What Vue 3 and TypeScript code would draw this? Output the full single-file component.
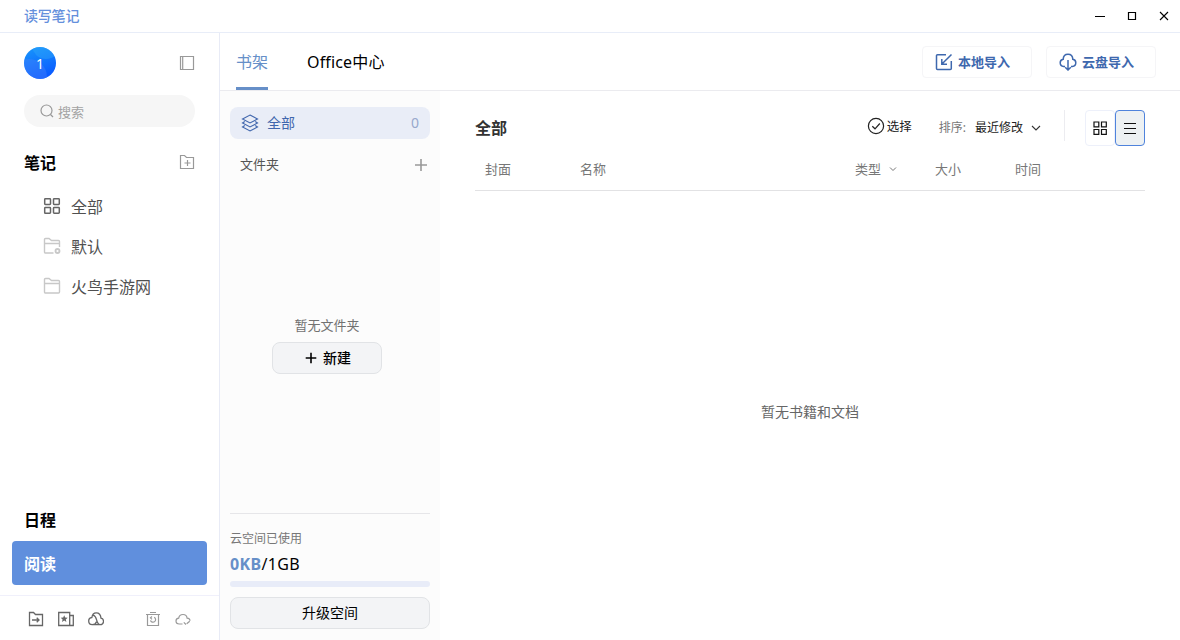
<script setup lang="ts">
import { ref } from 'vue'

interface Folder {
  name: string
  icon: 'grid' | 'default' | 'folder'
}

const folders: Folder[] = [
  { name: '全部', icon: 'grid' },
  { name: '默认', icon: 'default' },
  { name: '火鸟手游网', icon: 'folder' },
]

const tabs: string[] = ['书架', 'Office中心']
const activeTab = ref(0)
const viewMode = ref<'grid' | 'list'>('list')
</script>

<template>
  <div class="window">
    <header class="titlebar">
      <span class="brand">读写笔记</span>
      <div class="controls">
        <svg width="12" height="12" viewBox="0 0 12 12"><path d="M1 6.5h10" /></svg>
        <svg width="12" height="12" viewBox="0 0 12 12"><path d="M2.5 2.5h7v7h-7z" stroke-width="1.2" /></svg>
        <svg width="12" height="12" viewBox="0 0 12 12"><path d="M2 2l8 8M10 2l-8 8" stroke-width="1.1" /></svg>
      </div>
    </header>

    <div class="body">
      <aside class="sidebar">
        <div class="profile">
          <div class="avatar">
            <svg width="32" height="32" viewBox="0 0 32 32">
              <defs>
                <linearGradient id="avatarFill" x1="0" y1="0" x2="0.35" y2="1">
                  <stop offset="0" stop-color="#1898fb" />
                  <stop offset="1" stop-color="#0a5cff" />
                </linearGradient>
                <clipPath id="avatarClip"><circle cx="16" cy="16" r="16" /></clipPath>
              </defs>
              <g clip-path="url(#avatarClip)">
                <path d="M0 0h32v32H0z" fill="url(#avatarFill)" />
                <circle cx="22" cy="-2" r="14" fill="#32a9fb" opacity=".4" />
                <circle cx="5" cy="30" r="18" fill="#4a83fa" opacity=".4" />
              </g>
            </svg>
            <span>1</span>
          </div>
          <svg class="ic panel" width="16" height="16" viewBox="0 0 16 16"><path d="M1.5 1.5h13v13h-13zM3.7 2v12" /></svg>
        </div>

        <div class="search">
          <svg class="ic" width="14" height="14" viewBox="0 0 14 14"><circle cx="6.5" cy="6.5" r="5.5" /><path d="M10.5 10.5l2.5 2.5" /></svg>
          <span>搜索</span>
        </div>

        <div class="notes-head">
          <h2>笔记</h2>
          <svg class="ic" width="16" height="16" viewBox="0 0 16 16"><path d="M1.5 14.5v-13h4l2 2h7v11zM8.5 6v6M5.5 9h6" /></svg>
        </div>

        <ul class="folders">
          <li v-for="f in folders" :key="f.name">
            <svg v-if="f.icon === 'grid'" class="ic grid" width="18" height="18" viewBox="0 0 18 18">
              <rect x="1.7" y="1.7" width="5.8" height="5.8" rx=".7" /><rect x="10.5" y="1.7" width="5.8" height="5.8" rx=".7" />
              <rect x="1.7" y="10.5" width="5.8" height="5.8" rx=".7" /><rect x="10.5" y="10.5" width="5.8" height="5.8" rx=".7" />
            </svg>
            <svg v-else-if="f.icon === 'default'" class="ic pale" width="18" height="18" viewBox="0 0 18 18">
              <path d="M10.5 16h-8a1 1 0 0 1-1-1V2.5a1 1 0 0 1 1-1H6l2.500 2h7a1 1 0 0 1 1 1v5.500M1.500 6.500h15" /><circle cx="14.5" cy="14" r="2" stroke-width="1.8" />
            </svg>
            <svg v-else class="ic pale" width="18" height="18" viewBox="0 0 18 18"><path d="M2.5 16a1 1 0 0 1-1-1V2.500a1 1 0 0 1 1-1H6l2.500 2h7a1 1 0 0 1 1 1V15a1 1 0 0 1-1 1zM1.500 6.500h15" /></svg>
            <span>{{ f.name }}</span>
          </li>
        </ul>

        <div class="schedule">日程</div>
        <div class="reading">阅读</div>

        <footer class="tools">
          <svg class="ic dark" width="16" height="16" viewBox="0 0 16 16"><path d="M1.5 14.5v-13h4l2 2h7v11zM4 9h7M8.700 6.800L11 9l-2.300 2.200" /></svg>
          <svg class="ic dark" width="16" height="16" viewBox="0 0 16 16">
            <path d="M.7 1.5h11v13H.7zM11.7 4.500h3.600v10h-3.600" />
            <path class="solid" d="M6.2 4.2l1 2.300 2.500.2-1.900 1.700.6 2.500-2.200-1.300L4 10.900l.6-2.500-1.900-1.700 2.500-.2z" />
          </svg>
          <svg class="ic dark" width="16" height="16" viewBox="0 0 16 16">
            <path d="M4.200 13.700h7.900a3.300 3.300 0 0 0 .9-6.500C12.700 4 10.900 1.900 8.300 1.900 5.800 1.900 4.200 3.700 3.900 6.500 1.900 6.700.7 8.200.7 10.100c0 2.100 1.500 3.600 3.500 3.600zM5 4.200c2.400.6 3 2.200 3.600 4.600.6 2.600 1.500 4.500 3.500 4.900M4.200 13.700c2.200 0 3.700-1 4.300-3" />
          </svg>
          <svg class="ic trash" width="16" height="16" viewBox="0 0 16 16">
            <path d="M1 3.5h14M5 1.500h6M2.500 4v10.500h11V4M7 5.500L5.500 6.800 7 8.300M9.200 6.300a2.600 2.600 0 1 1-3.700 3" />
          </svg>
          <svg class="ic cloud" width="16" height="16" viewBox="0 0 16 16">
            <path d="M7.500 13H4.300C2.400 13 1 11.800 1 10.100c0-1.600 1.100-2.700 2.700-2.900C4.100 4.800 5.700 3.500 8 3.500s3.800 1.400 4.100 3.600c1.800.1 2.900 1.200 2.900 2.700M8.800 11.300l2.200 2.200M11.700 12.800l3-2.600" />
          </svg>
        </footer>
      </aside>

      <main class="main">
        <nav class="topbar">
          <div class="tabs">
            <div v-for="(t, i) in tabs" :key="t" class="tab" :class="{ active: i === activeTab }" @click="activeTab = i">{{ t }}</div>
          </div>
          <div class="imports">
            <button class="import">
              <svg width="18" height="18" viewBox="0 0 18 18"><path d="M11 1.7H2.500a1 1 0 0 0-1 1v12.800a1 1 0 0 0 1 1h12.800a1 1 0 0 0 1-1V8M16.500 1.500L7.200 10.800M6.800 6v5.200H12" /></svg>
              <span>本地导入</span>
            </button>
            <button class="import">
              <svg width="18" height="18" viewBox="0 0 18 18"><path d="M6 13.500H4.700C2.700 13.300 1.200 11.800 1.200 9.800c0-1.800 1.200-3.200 3-3.500C4.300 3.300 6.300 1.200 9 1.200s4.700 2.100 4.800 5.100c1.800.3 3 1.700 3 3.500 0 2-1.500 3.500-3.500 3.700H12M9 7v9.700M6.200 14.300L9 17l2.800-2.700" /></svg>
              <span>云盘导入</span>
            </button>
          </div>
        </nav>

        <div class="content">
          <section class="shelf">
            <div class="all">
              <svg width="18" height="18" viewBox="0 0 18 18"><path d="M9 1l7.500 4L9 9 1.500 5zM3.800 7.500L1.500 9 9 13l7.500-4-2.300-1.500M3.800 11.500L1.500 13 9 17l7.500-4-2.300-1.500" /></svg>
              <span>全部</span>
              <b>0</b>
            </div>
            <div class="folder-head">
              <span>文件夹</span>
              <svg width="14" height="14" viewBox="0 0 14 14"><path d="M7 1v12M1 7h12" /></svg>
            </div>
            <div class="empty-folders">
              <p>暂无文件夹</p>
              <button class="soft create">
                <svg width="12" height="12" viewBox="0 0 12 12"><path d="M6 .7v10.600M.7 6h10.600" /></svg>
                <span>新建</span>
              </button>
            </div>
            <div class="storage">
              <div class="caption">云空间已使用</div>
              <div class="usage"><strong>0KB</strong>/1GB</div>
              <div class="bar"></div>
              <button class="soft upgrade">升级空间</button>
            </div>
          </section>

          <section class="library">
            <div class="lib-head">
              <h1>全部</h1>
              <div class="select">
                <svg width="18" height="18" viewBox="0 0 18 18"><circle cx="9" cy="9" r="7.600" /><path d="M5.300 9.200l2.700 2.600 4.800-5.300" /></svg>
                <span>选择</span>
              </div>
              <div class="sort"><span>排序:</span><em>最近修改</em>
                <svg width="10" height="10" viewBox="0 0 10 10"><path d="M1 3l4 4 4-4" /></svg>
              </div>
              <i class="divider"></i>
              <div class="views">
                <div class="view" :class="{ on: viewMode === 'grid' }" @click="viewMode = 'grid'">
                  <svg width="14" height="14" viewBox="0 0 14 14"><path d="M1 1h4.800v4.800H1zM8.500 1h4.800v4.800H8.500zM1 8.500h4.800v4.800H1zM8.500 8.500h4.800v4.800H8.500z" /></svg>
                </div>
                <div class="view" :class="{ on: viewMode === 'list' }" @click="viewMode = 'list'">
                  <svg width="14" height="14" viewBox="0 0 14 14"><path d="M1 2.500h12M1 7.500h12M1 12.500h12" /></svg>
                </div>
              </div>
            </div>
            <div class="columns">
              <span>封面</span>
              <span>名称</span>
              <span class="type">类型 <svg width="8" height="8" viewBox="0 0 8 8"><path d="M1 2.500l3 3 3-3" /></svg></span>
              <span>大小</span>
              <span>时间</span>
            </div>
            <div class="empty-books">暂无书籍和文档</div>
          </section>
        </div>
      </main>
    </div>
  </div>
</template>

<style>
html,
body {
  margin: 0;
  overflow: hidden;
}
</style>

<style scoped>
* {
  box-sizing: border-box;
}
.window {
  width: 1180px;
  height: 640px;
  display: flex;
  flex-direction: column;
  background: #fff;
  color: #000;
  font-family: "Noto Sans", "Noto Sans CJK SC", sans-serif;
  font-size: 13px;
  line-height: 20px;
}
svg {
  display: block;
  flex: none;
  fill: none;
  stroke: currentColor;
}
.avatar svg {
  stroke: none;
}
h1,
h2,
p,
ul {
  margin: 0;
  padding: 0;
}
button {
  font: inherit;
  color: inherit;
  padding: 0;
}
.titlebar {
  height: 33px;
  flex: none;
  display: flex;
  justify-content: space-between;
  align-items: center;
  padding: 0 10px 0 24px;
  border-bottom: 1px solid #e8edf8;
}
.brand {
  color: #6590dc;
  font-size: 14px;
  font-weight: 500;
  letter-spacing: -0.2px;
}
.controls {
  display: flex;
  gap: 20px;
}
.body {
  flex: 1;
  min-height: 0;
  display: flex;
}
.sidebar {
  width: 220px;
  flex: none;
  border-right: 1px solid #e8ebf6;
  display: flex;
  flex-direction: column;
}
.ic {
  color: #999;
  stroke-width: 1.2;
}
.profile {
  display: flex;
  justify-content: space-between;
  align-items: center;
  height: 32px;
  margin: 14px 24px 0;
}
.avatar {
  display: grid;
  width: 32px;
  height: 32px;
  place-items: center;
}
.avatar > * {
  grid-area: 1 / 1;
}
.avatar span {
  color: #fff;
  font-size: 14px;
  z-index: 1;
  padding-top: 2px;
}
.search {
  margin: 16px 24px 0;
  height: 32px;
  border-radius: 16px;
  background: #f6f6f6;
  color: #a3a3a3;
  display: flex;
  align-items: center;
  padding-left: 16px;
  gap: 4px;
}
.search span {
  padding-top: 1px;
}
.notes-head {
  display: flex;
  justify-content: space-between;
  align-items: center;
  height: 24px;
  margin: 24px 24px 0;
}
.notes-head h2 {
  font-size: 16px;
  font-weight: 700;
}
.notes-head svg {
  margin-top: -2px;
}
.folders {
  list-style: none;
  margin-top: 12px;
}
.folders li {
  height: 40px;
  padding-left: 43px;
  display: flex;
  align-items: center;
  gap: 10px;
  font-size: 16px;
  color: #505050;
}
.folders svg {
  margin-top: -2px;
}
.grid {
  color: #666;
  stroke-width: 1.5;
}
.pale {
  color: #c8c8c8;
  stroke-width: 1.4;
}
.schedule {
  margin: auto 0 11px 24px;
  font-size: 16px;
  font-weight: 700;
}
.reading {
  height: 44px;
  margin: 0 12px 10px;
  padding-left: 12px;
  border-radius: 4px;
  background: #608fdd;
  color: #fff;
  font-size: 16px;
  font-weight: 700;
  line-height: 46px;
}
.tools {
  height: 45px;
  border-top: 1px solid #f0f0fb;
  display: flex;
  align-items: center;
  padding: 2px 0 0 28px;
  gap: 14px;
}
.dark {
  color: #666;
  stroke-width: 1.3;
}
.dark .solid {
  fill: currentColor;
  stroke: none;
}
.trash {
  margin-left: 27px;
}
.main {
  flex: 1;
  display: flex;
  flex-direction: column;
}
.topbar {
  height: 58px;
  flex: none;
  border-bottom: 1px solid #ebebef;
  display: flex;
  justify-content: space-between;
  padding: 0 24px 0 16px;
}
.tabs {
  display: flex;
  gap: 39px;
  font-size: 16px;
  line-height: 58px;
}
.tab {
  height: 57px;
}
.tab + .tab {
  letter-spacing: 0.15px;
}
.tab.active {
  color: #668fc8;
  background: linear-gradient(#668fc8, #668fc8) bottom / 100% 3px no-repeat;
}
.imports {
  display: flex;
  align-items: center;
  gap: 14px;
}
.import {
  width: 110px;
  height: 32px;
  border: 1px solid #f5f5f7;
  border-radius: 4px;
  background: #fff;
  color: #3e68ae;
  display: flex;
  align-items: center;
  padding-left: 12px;
  gap: 5px;
  font-weight: 700;
}
.import svg {
  stroke-width: 1.5;
}
.content {
  flex: 1;
  display: flex;
}
.shelf {
  width: 220px;
  background: #fcfcfc;
  padding: 16px 10px 11px;
  display: flex;
  flex-direction: column;
}
.all {
  height: 32px;
  border-radius: 8px;
  background: #e9edf7;
  color: #4066ad;
  display: flex;
  align-items: center;
  padding: 0 11px;
  gap: 8px;
  font-size: 14px;
}
.all svg {
  stroke-width: 1.1;
}
.all b {
  margin-left: auto;
  font-weight: 400;
  color: #97a8cc;
}
.folder-head {
  display: flex;
  justify-content: space-between;
  align-items: center;
  height: 20px;
  margin-top: 16px;
  padding: 0 2px 0 10px;
  color: #555;
}
.folder-head span {
  margin-top: -2px;
}
.folder-head svg {
  color: #999;
  stroke-width: 1.6;
}
.empty-folders {
  flex: 1;
  display: flex;
  flex-direction: column;
  align-items: center;
  padding-top: 140px;
  color: #717171;
}
.empty-folders p {
  padding-right: 6px;
}
.soft {
  height: 32px;
  border: 1px solid #e1e3e6;
  border-radius: 8px;
  background: #f3f4f6;
  color: #000;
  font-size: 14px;
}
.create {
  width: 110px;
  margin: 7px 6px 0 0;
  display: flex;
  align-items: center;
  justify-content: center;
  gap: 6px;
  padding-left: 2px;
  font-weight: 500;
}
.create svg {
  stroke-width: 1.6;
}
.storage {
  border-top: 1px solid #e6e6e9;
  padding-top: 15px;
}
.caption {
  font-size: 12px;
  color: #777;
}
.usage {
  font-size: 16px;
  line-height: 24px;
  margin-top: 3px;
  letter-spacing: 0.35px;
}
.usage strong {
  color: #668fc8;
}
.bar {
  height: 6px;
  margin: 5px 0 10px;
  border-radius: 3px;
  background: #e8ecf8;
}
.upgrade {
  width: 100%;
  display: block;
}
.library {
  flex: 1;
  padding: 19px 35px 0;
  display: flex;
  flex-direction: column;
}
.lib-head {
  height: 36px;
  display: flex;
  align-items: center;
}
.lib-head h1 {
  font-size: 16px;
  font-weight: 700;
  color: #333;
  margin-right: auto;
}
.select {
  display: flex;
  align-items: center;
  gap: 2px;
  color: #222;
  font-size: 12.5px;
  margin: -4px 27px 0 0;
}
.select span {
  padding-top: 1px;
}
.select svg {
  stroke-width: 1.2;
}
.sort {
  display: flex;
  align-items: center;
  font-size: 12px;
  color: #777;
}
.sort em {
  font-style: normal;
  color: #222;
  margin: 0 8px 0 9px;
}
.sort svg {
  color: #333;
  stroke-width: 1.1;
}
.divider {
  width: 1px;
  height: 31px;
  background: #ececf0;
  margin: -5px 20px 0 23px;
}
.views {
  display: flex;
}
.view {
  width: 30px;
  height: 36px;
  border: 1px solid #edf0fa;
  border-radius: 4px;
  display: grid;
  place-items: center;
  color: #111;
}
.view svg {
  stroke-width: 1.2;
}
.view.on {
  background: #edf1f3;
  border-color: #4f83dc;
}
.columns {
  height: 45px;
  border-bottom: 1px solid #e2e2e4;
  display: grid;
  grid-template-columns: 95px 275px 80px 80px 1fr;
  align-items: start;
  padding: 13px 0 0 10px;
  color: #777;
}
.type {
  display: flex;
  align-items: center;
  gap: 8px;
}
.empty-books {
  margin-top: 211px;
  text-align: center;
  font-size: 14px;
  color: #666;
}
</style>
